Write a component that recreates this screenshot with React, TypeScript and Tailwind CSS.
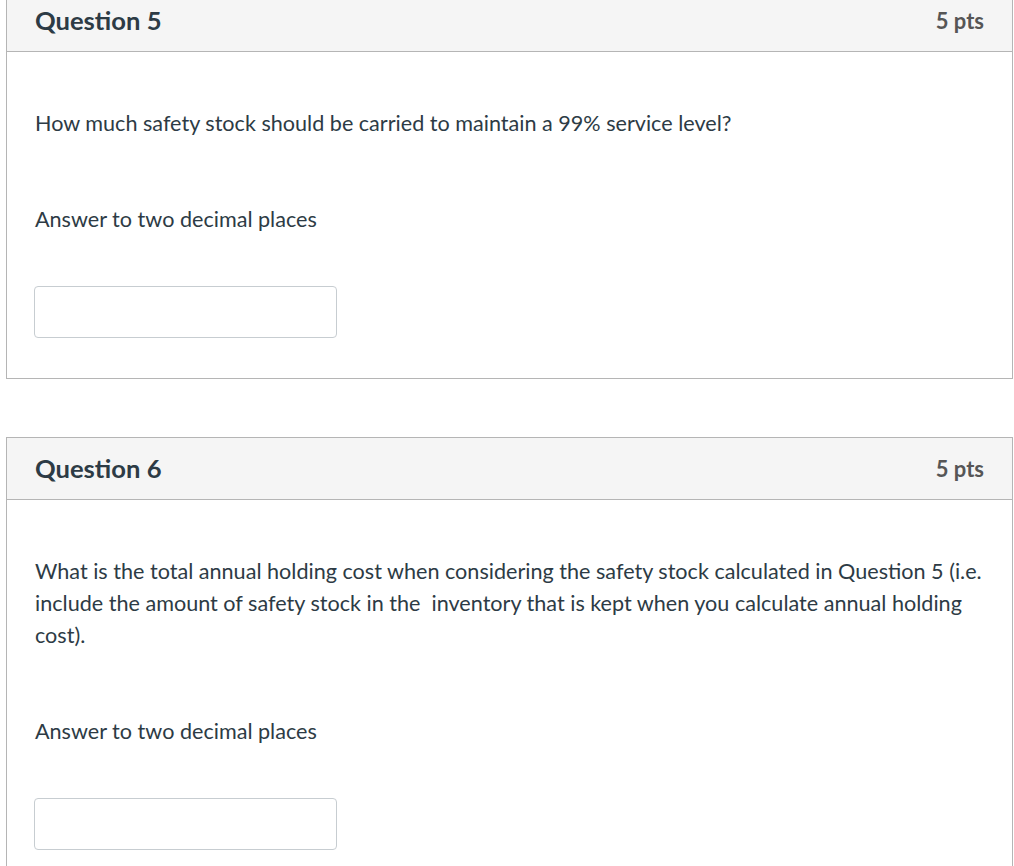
const questions = [
  {
    id: 5,
    points: 5,
    text: ['How much safety stock should be carried to maintain a 99% service level?'],
  },
  {
    id: 6,
    points: 5,
    text: [
      'What is the total annual holding cost when considering the safety stock calculated in Question 5 (i.e. include the amount of safety stock in the\u00a0 inventory that is kept when you calculate annual holding cost).',
    ],
  },
];

function QuestionCard({ id, points, text }: { id: number; points: number; text: string[] }) {
  return (
    <div className="border border-[#b5b5b5] bg-white">
      <div className="flex h-[62px] items-center justify-between border-b border-[#b5b5b5] bg-[#f5f5f5] px-[28px]">
        <span className="text-[25.6px] font-bold text-[#2d3b45]">Question {id}</span>
        <span className="text-[22px] font-bold text-[#565656]">{points} pts</span>
      </div>
      <div className="px-[28px] pt-[55px] pb-[40px] text-[21.6px] leading-[32px] text-[#2d3b45]">
        {text.map((t, i) => (
          <p key={i}>{t}</p>
        ))}
        <p className="mt-[64px]">Answer to two decimal places</p>
        <input
          type="text"
          className="mt-[51px] block h-[52px] w-[303px] rounded-[4px] border border-[#c7cdd1] bg-white -ml-px"
        />
      </div>
    </div>
  );
}

export default function App() {
  return (
    <div className="min-h-screen bg-white font-['Lato',sans-serif]">
      <div className="-mt-[11px] ml-[6px] mr-px flex flex-col gap-[58px]">
        {questions.map((q) => (
          <QuestionCard key={q.id} {...q} />
        ))}
      </div>
    </div>
  );
}
